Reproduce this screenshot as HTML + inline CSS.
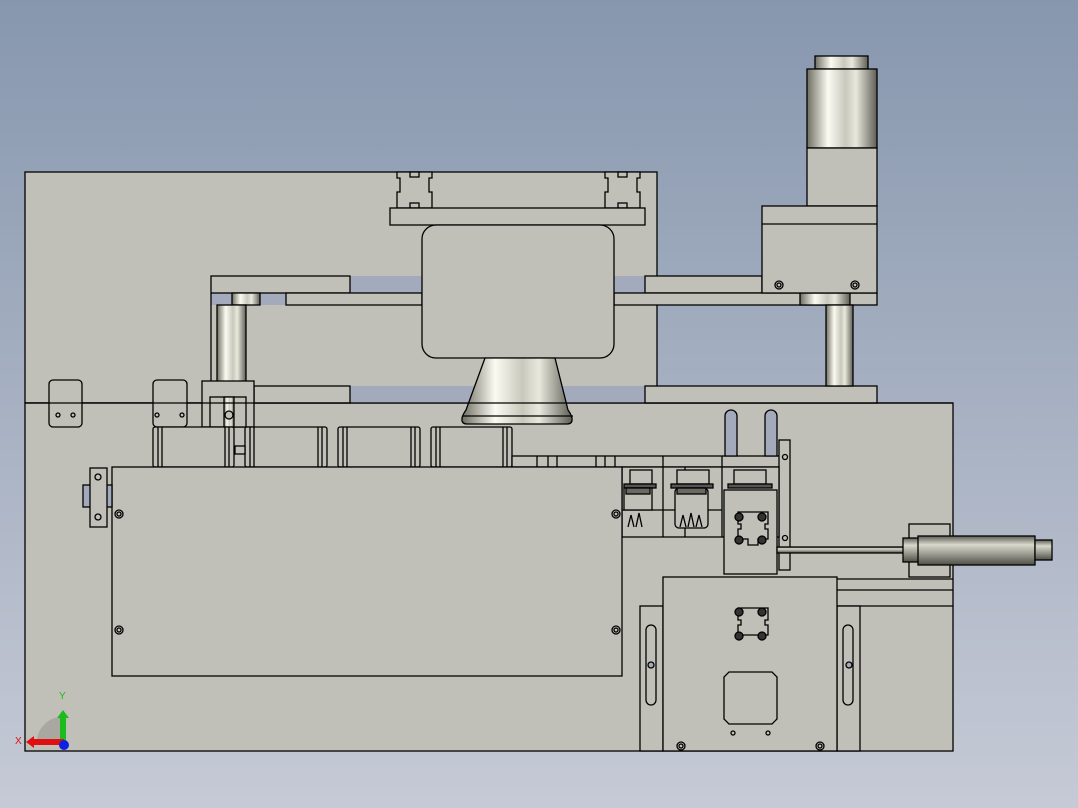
<!DOCTYPE html>
<html><head><meta charset="utf-8"><style>
html,body{margin:0;padding:0;width:1078px;height:808px;overflow:hidden}
body{background:linear-gradient(#8797ae,#c6cad6)}
svg{position:absolute;left:0;top:0}
</style></head><body>
<svg width="1078" height="808" viewBox="0 0 1078 808" xmlns="http://www.w3.org/2000/svg">
<defs>
<linearGradient id="cy" x1="0" x2="1"><stop offset="0" stop-color="#6e6e62"/><stop offset=".3" stop-color="#fbfbf2"/><stop offset=".55" stop-color="#c8c8bc"/><stop offset=".7" stop-color="#e8e8dc"/><stop offset="1" stop-color="#5e5e56"/></linearGradient>
<linearGradient id="cyv" x1="0" x2="0" y1="0" y2="1"><stop offset="0" stop-color="#5e5e56"/><stop offset=".3" stop-color="#d8d8cc"/><stop offset=".6" stop-color="#a0a096"/><stop offset="1" stop-color="#4e4e46"/></linearGradient>
</defs>
<g fill="#c0c0b8" stroke="#000" stroke-width="1.3">
<!-- top back plate -->
<rect x="25" y="172" width="632" height="231"/>
<!-- lower plate -->
<rect x="25" y="403" width="928" height="348"/>
<!-- blue gaps -->
<rect x="350" y="276" width="72" height="17" fill="#a2aabb" stroke="none"/>
<rect x="614" y="276" width="31" height="17" fill="#a2aabb" stroke="none"/>
<rect x="211" y="293" width="75" height="12" fill="#a2aabb" stroke="none"/>
<rect x="760" y="293" width="117" height="12" fill="#a2aabb" stroke="none"/>
<rect x="350" y="386" width="295" height="17" fill="#a2aabb" stroke="none"/>
<!-- bars -->
<rect x="211" y="276" width="139" height="17"/>
<rect x="645" y="276" width="117" height="17"/>
<rect x="286" y="293" width="136" height="12"/>
<rect x="614" y="293" width="263" height="12"/>
<rect x="254" y="386" width="96" height="17"/>
<rect x="645" y="386" width="232" height="17"/>
<line x1="211" y1="293" x2="211" y2="382"/>
<!-- columns -->
<rect x="232" y="293" width="28" height="12" fill="url(#cy)"/>
<rect x="217" y="305" width="29" height="77" fill="url(#cy)"/>
<rect x="800" y="293" width="50" height="12" fill="url(#cy)"/>
<rect x="826" y="305" width="27" height="81" fill="url(#cy)"/>
<!-- rail & blocks -->
<path d="M397 172h35v6h-3v14h3v16h-35v-16h3v-14h-3z"/>
<path d="M605 172h35v6h-3v14h3v16h-35v-16h3v-14h-3z"/>
<rect x="410" y="172" width="9" height="5"/><rect x="410" y="203" width="9" height="5"/>
<rect x="618" y="172" width="9" height="5"/><rect x="618" y="203" width="9" height="5"/>
<rect x="390" y="208" width="255" height="17"/>
<rect x="422" y="225" width="192" height="133" rx="14"/>
<!-- cone -->
<path d="M485 358h70l13 52q3 4 4 8v3q-1 3-5 3h-100q-4 0-5-3v-3q1-4 4-8z" fill="url(#cy)"/>
<line x1="463" y1="416" x2="573" y2="416"/>
<!-- top right motor -->
<rect x="815" y="56" width="53" height="13" fill="url(#cy)"/>
<rect x="807" y="69" width="70" height="79" fill="url(#cy)"/>
<rect x="807" y="148" width="70" height="58"/>
<rect x="762" y="206" width="115" height="87"/>
<line x1="762" y1="224" x2="877" y2="224"/>
<circle cx="779" cy="285" r="4"/><circle cx="779" cy="285" r="2"/>
<circle cx="855" cy="285" r="4"/><circle cx="855" cy="285" r="2"/>
<!-- small brackets -->
<rect x="49" y="380" width="33" height="47" rx="4"/>
<circle cx="58" cy="415" r="2"/><circle cx="73" cy="415" r="2"/>
<rect x="153" y="380" width="34" height="47" rx="4"/>
<circle cx="157" cy="415" r="2"/><circle cx="182" cy="415" r="2"/>
<rect x="202" y="381" width="52" height="46"/>
<rect x="210" y="397" width="36" height="30"/>
<rect x="224" y="397" width="10" height="30" fill="url(#cy)"/>
<circle cx="229" cy="415" r="4"/>
<line x1="25" y1="403" x2="953" y2="403"/>
<!-- modules -->
<g>
<rect x="153" y="427" width="81" height="40" rx="2"/><path d="M158 427v40M162 427v40M225 427v40M229 427v40" fill="none"/>
<rect x="245" y="427" width="82" height="40" rx="2"/><path d="M250 427v40M254 427v40M318 427v40M322 427v40" fill="none"/>
<rect x="338" y="427" width="82" height="40" rx="2"/><path d="M343 427v40M347 427v40M411 427v40M415 427v40" fill="none"/>
<rect x="431" y="427" width="81" height="40" rx="2"/><path d="M436 427v40M440 427v40M503 427v40M507 427v40" fill="none"/>
<rect x="235" y="446" width="10" height="8"/>
</g>
<!-- strip -->
<rect x="512" y="456" width="268" height="11"/>
<path d="M537 456v11M548 456v11M557 456v11M596 456v11M605 456v11M615 456v11" fill="none"/>
<!-- slots -->
<path d="M725 456v-40a6 6 0 0 1 12 0v40z" fill="#a2aabb"/>
<path d="M765 456v-40a6 6 0 0 1 12 0v40z" fill="#a2aabb"/>
<rect x="779" y="440" width="11" height="130"/>
<circle cx="785" cy="457" r="2.5"/><circle cx="785" cy="538" r="2.5"/>
<!-- right sub plate with connectors -->
<rect x="622" y="467" width="157" height="70"/>
<path d="M663 456v81M722 456v81M685 467v70M722 510H622" fill="none"/>
<rect x="630" y="470" width="22" height="14"/><rect x="624" y="484" width="32" height="4" fill="#555"/>
<rect x="624" y="488" width="28" height="22" fill="#c0c0b8"/><rect x="626" y="488" width="24" height="6" fill="#6a6a62"/>
<rect x="677" y="470" width="32" height="14"/><rect x="671" y="484" width="42" height="4" fill="#555"/>
<rect x="675" y="488" width="33" height="40" rx="4"/><rect x="677" y="488" width="29" height="6" fill="#6a6a62"/>
<path d="M680 527l3-12 3 12M688 527l3-14 3 14M696 527l3-12 3 12" fill="none"/>
<path d="M628 527l3-12 3 12M636 527l3-14 3 14" fill="none"/>
<rect x="734" y="470" width="32" height="14"/><rect x="728" y="484" width="44" height="4" fill="#555"/>
<!-- slider block -->
<rect x="724" y="490" width="53" height="84"/>
<path d="M738 512h30v12h-3v5h3v10h-10v6h-10v-6h-10v-10h3v-5h-3z" fill="none"/>
<circle cx="739" cy="517" r="4" fill="#333"/><circle cx="762" cy="517" r="4" fill="#333"/>
<circle cx="739" cy="540" r="4" fill="#333"/><circle cx="762" cy="540" r="4" fill="#333"/>
<!-- rod & cylinder -->
<rect x="777" y="547" width="128" height="6" fill="url(#cyv)"/>
<rect x="909" y="524" width="41" height="53"/>
<rect x="903" y="538" width="16" height="24" fill="url(#cyv)"/>
<rect x="918" y="536" width="117" height="29" fill="url(#cyv)"/>
<rect x="1035" y="540" width="17" height="20" fill="url(#cyv)"/>
<!-- bottom area -->
<path d="M777 579H953M777 590H953M837 606H953" fill="none"/>
<rect x="640" y="606" width="23" height="145"/>
<rect x="837" y="606" width="23" height="145"/>
<rect x="646" y="625" width="10" height="80" rx="5"/><circle cx="651" cy="665" r="3" fill="#a2aabb"/>
<rect x="843" y="625" width="10" height="80" rx="5"/><circle cx="849" cy="665" r="3" fill="#a2aabb"/>
<rect x="663" y="577" width="174" height="174"/>
<path d="M738 608h30v12h-3v5h3v10h-30v-10h3v-5h-3z" fill="none"/>
<circle cx="739" cy="612" r="4" fill="#333"/><circle cx="762" cy="612" r="4" fill="#333"/>
<circle cx="739" cy="636" r="4" fill="#333"/><circle cx="762" cy="636" r="4" fill="#333"/>
<path d="M729 672h43l5 5v42l-5 5h-43l-5-5v-42z"/>
<circle cx="733" cy="733" r="2"/><circle cx="768" cy="733" r="2"/>
<circle cx="681" cy="746" r="4"/><circle cx="681" cy="746" r="2"/>
<circle cx="820" cy="746" r="4"/><circle cx="820" cy="746" r="2"/>
<!-- big front plate -->
<rect x="112" y="467" width="510" height="209"/>
<circle cx="119" cy="514" r="4"/><circle cx="119" cy="514" r="2"/>
<circle cx="119" cy="630" r="4"/><circle cx="119" cy="630" r="2"/>
<circle cx="616" cy="514" r="4"/><circle cx="616" cy="514" r="2"/>
<circle cx="616" cy="630" r="4"/><circle cx="616" cy="630" r="2"/>
<!-- left clamp -->
<rect x="83" y="485" width="29" height="22" fill="#a2aabb"/>
<rect x="90" y="468" width="17" height="59"/>
<circle cx="98" cy="477" r="3"/><circle cx="98" cy="517" r="3"/>
</g>
<!-- triad -->
<path d="M37 742a25 25 0 0 1 25-25v25z" fill="#a8a8a0"/>
<rect x="60" y="716" width="6" height="30" fill="#1dbb1d"/>
<path d="M57 718l6-8 6 8z" fill="#1dbb1d"/>
<rect x="32" y="739" width="32" height="6" fill="#e01010"/>
<path d="M34 736l-8 6 8 6z" fill="#e01010"/>
<circle cx="64" cy="745" r="5" fill="#1020e0"/>
<text x="59" y="699" font-family="Liberation Sans,sans-serif" font-size="10" fill="#1dbb1d">Y</text>
<text x="15" y="744" font-family="Liberation Sans,sans-serif" font-size="10" fill="#e01010">X</text>
</svg>
</body></html>
